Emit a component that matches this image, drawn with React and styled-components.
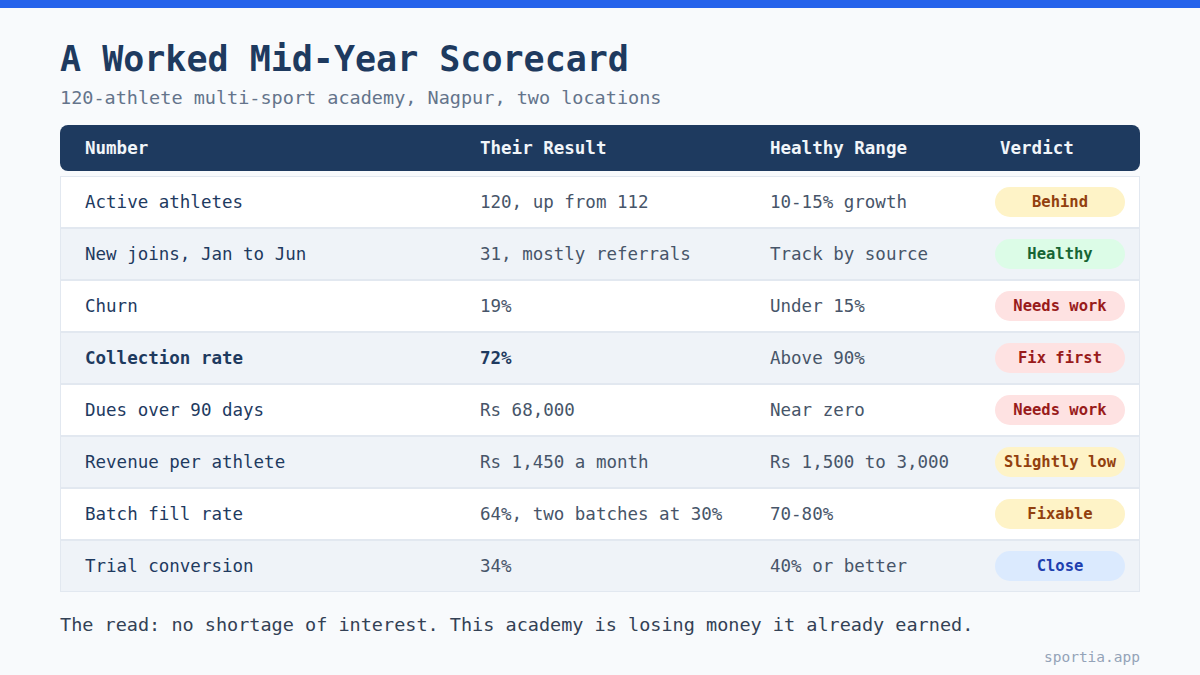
import React from "react";
import styled, { createGlobalStyle } from "styled-components";

const Global = createGlobalStyle`
  html, body { margin: 0; padding: 0; background: #f8fafc; }
  body { font-family: "DejaVu Sans Mono", "Liberation Mono", monospace; }
`;

const Page = styled.div`
  width: 1200px;
  height: 675px;
  box-sizing: border-box;
  background: #f8fafc;
  border-top: 8px solid #2563eb;
  padding: 30px 60px 0;
  display: flex;
  flex-direction: column;
`;

const Title = styled.h1`
  margin: 0;
  font-size: 35px;
  line-height: 42px;
  font-weight: 700;
  color: #1e3a5f;
`;

const Subtitle = styled.p`
  margin: 7px 0 0;
  font-size: 18.5px;
  line-height: 22px;
  color: #64748b;
`;

const Table = styled.div`
  margin-top: 16px;
  display: flex;
  flex-direction: column;
`;

const cols = "395px 290px 230px 165px";

const HeadRow = styled.div`
  display: grid;
  grid-template-columns: ${cols};
  height: 46px;
  align-items: center;
  background: #1e3a5f;
  border-radius: 8px;
  color: #f1f5f9;
  font-size: 17.5px;
  font-weight: 700;
  margin-bottom: 5px;
`;

const HeadCell = styled.div`
  padding-left: 25px;
`;

const Row = styled.div`
  display: grid;
  grid-template-columns: ${cols};
  height: 52px;
  box-sizing: border-box;
  align-items: center;
  background: ${(p) => (p.$alt ? "#eff3f8" : "#ffffff")};
  border: 1px solid #e2e8f0;
  font-size: 17.5px;
`;

const Cell = styled.div`
  padding-left: 24px;
  color: ${(p) => (p.$first ? "#1e3a5f" : "#475569")};
  font-weight: ${(p) => (p.$bold ? 700 : 400)};
  white-space: nowrap;
`;

const BadgeCell = styled.div`
  padding-left: 19px;
`;

const tones = {
  amber: { bg: "#fef3c7", fg: "#92400e" },
  green: { bg: "#dcfce7", fg: "#166534" },
  red: { bg: "#fee2e2", fg: "#991b1b" },
  blue: { bg: "#dbeafe", fg: "#1e40af" },
};

const Badge = styled.span`
  display: inline-flex;
  align-items: center;
  justify-content: center;
  width: 130px;
  height: 30px;
  border-radius: 15px;
  font-size: 15.5px;
  font-weight: 700;
  background: ${(p) => tones[p.$tone].bg};
  color: ${(p) => tones[p.$tone].fg};
  white-space: nowrap;
`;

const Summary = styled.p`
  margin: 22px 0 0;
  font-size: 18.5px;
  line-height: 22px;
  color: #334155;
`;

const Brand = styled.div`
  margin-top: 13px;
  align-self: flex-end;
  font-size: 14.5px;
  color: #94a3b8;
`;

const rows = [
  ["Active athletes", "120, up from 112", "10-15% growth", "Behind", "amber"],
  ["New joins, Jan to Jun", "31, mostly referrals", "Track by source", "Healthy", "green"],
  ["Churn", "19%", "Under 15%", "Needs work", "red"],
  ["Collection rate", "72%", "Above 90%", "Fix first", "red", true],
  ["Dues over 90 days", "Rs 68,000", "Near zero", "Needs work", "red"],
  ["Revenue per athlete", "Rs 1,450 a month", "Rs 1,500 to 3,000", "Slightly low", "amber"],
  ["Batch fill rate", "64%, two batches at 30%", "70-80%", "Fixable", "amber"],
  ["Trial conversion", "34%", "40% or better", "Close", "blue"],
];

export default function App() {
  return (
    <>
      <Global />
      <Page>
        <Title>A Worked Mid-Year Scorecard</Title>
        <Subtitle>120-athlete multi-sport academy, Nagpur, two locations</Subtitle>
        <Table>
          <HeadRow>
            <HeadCell>Number</HeadCell>
            <HeadCell>Their Result</HeadCell>
            <HeadCell>Healthy Range</HeadCell>
            <HeadCell>Verdict</HeadCell>
          </HeadRow>
          {rows.map(([a, b, c, v, tone, bold], i) => (
            <Row key={a} $alt={i % 2 === 1}>
              <Cell $first $bold={bold}>{a}</Cell>
              <Cell $first={bold} $bold={bold}>{b}</Cell>
              <Cell>{c}</Cell>
              <BadgeCell>
                <Badge $tone={tone}>{v}</Badge>
              </BadgeCell>
            </Row>
          ))}
        </Table>
        <Summary>
          The read: no shortage of interest. This academy is losing money it already earned.
        </Summary>
        <Brand>sportia.app</Brand>
      </Page>
    </>
  );
}
